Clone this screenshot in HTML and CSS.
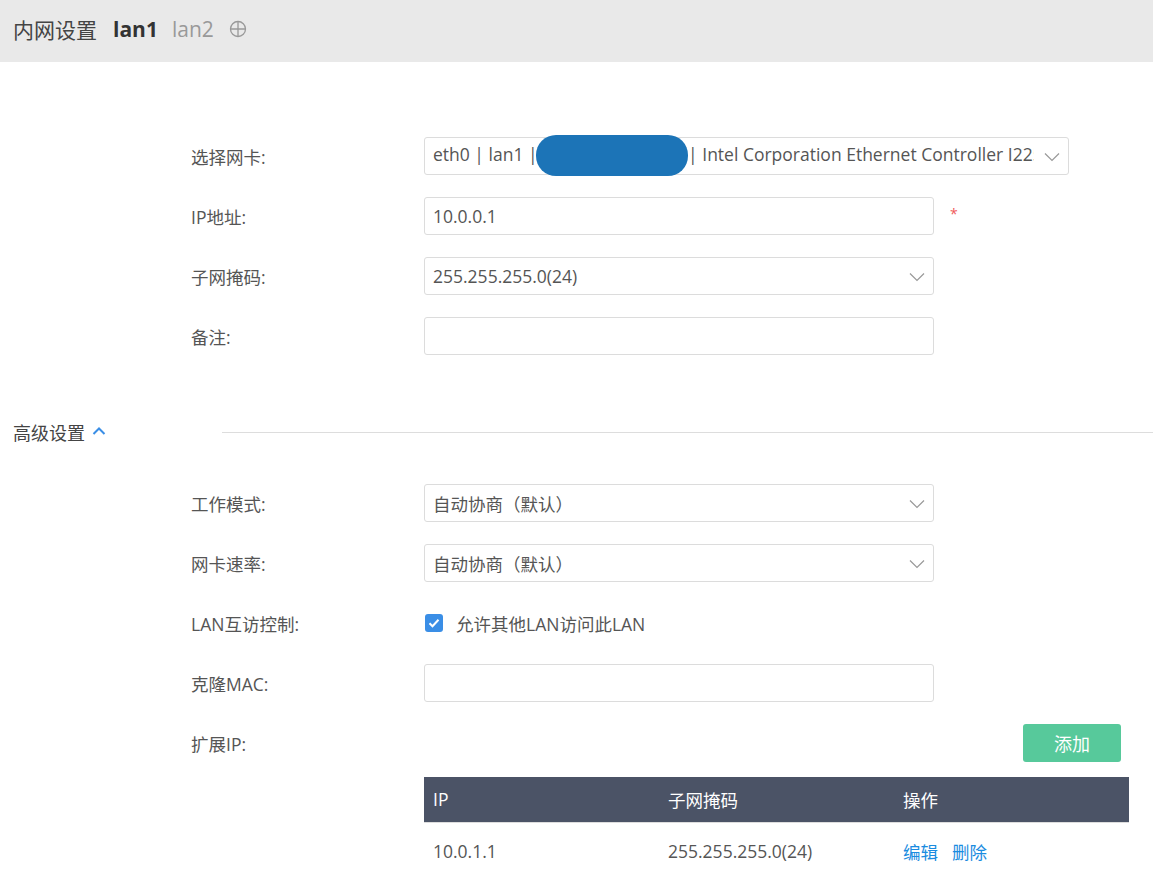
FILE: index.html
```html
<!DOCTYPE html>
<html lang="zh">
<head>
<meta charset="utf-8">
<link rel="stylesheet" href="styles.css">
</head>
<body>
<div class="header">
  <span class="title">内网设置</span>
  <span class="tab active">lan1</span>
  <span class="tab">lan2</span>
  <svg class="add-tab" width="18" height="18" viewBox="0 0 18 18"><circle cx="9" cy="9" r="7.5" fill="none" stroke="#999" stroke-width="1.3"/><path d="M1.5 9h15M9 1.5v15" stroke="#999" stroke-width="1.3"/></svg>
</div>

<div class="form first">
  <div class="row">
    <div class="label">选择网卡:</div>
    <div class="field select wide">
      <span class="val">eth0 | lan1 | <span class="blob"></span>| Intel Corporation Ethernet Controller I225-V</span>
      <svg class="arrow" width="16" height="10" viewBox="0 0 16 10"><path d="M1 1.5l7 7 7-7" fill="none" stroke="#999" stroke-width="1.2"/></svg>
    </div>
  </div>
  <div class="row">
    <div class="label">IP地址:</div>
    <div class="field"><span class="val">10.0.0.1</span></div>
    <span class="req">*</span>
  </div>
  <div class="row">
    <div class="label">子网掩码:</div>
    <div class="field select">
      <span class="val">255.255.255.0(24)</span>
      <svg class="arrow" width="16" height="10" viewBox="0 0 16 10"><path d="M1 1.5l7 7 7-7" fill="none" stroke="#999" stroke-width="1.2"/></svg>
    </div>
  </div>
  <div class="row">
    <div class="label">备注:</div>
    <div class="field"></div>
  </div>
</div>

<div class="section">
  <span class="section-title">高级设置</span>
  <svg class="chev" width="14" height="10" viewBox="0 0 14 10"><path d="M1.5 8l5.5-5.5 5.5 5.5" fill="none" stroke="#3a8ee6" stroke-width="2"/></svg>
  <div class="section-line"></div>
</div>

<div class="form second">
  <div class="row">
    <div class="label">工作模式:</div>
    <div class="field select">
      <span class="val">自动协商（默认）</span>
      <svg class="arrow" width="16" height="10" viewBox="0 0 16 10"><path d="M1 1.5l7 7 7-7" fill="none" stroke="#999" stroke-width="1.2"/></svg>
    </div>
  </div>
  <div class="row">
    <div class="label">网卡速率:</div>
    <div class="field select">
      <span class="val">自动协商（默认）</span>
      <svg class="arrow" width="16" height="10" viewBox="0 0 16 10"><path d="M1 1.5l7 7 7-7" fill="none" stroke="#999" stroke-width="1.2"/></svg>
    </div>
  </div>
  <div class="row">
    <div class="label">LAN互访控制:</div>
    <label class="check">
      <span class="box"><svg width="12" height="10" viewBox="0 0 12 10"><path d="M1.5 5.2l3 3 6-6.5" fill="none" stroke="#fff" stroke-width="2"/></svg></span>
      <span class="check-text">允许其他LAN访问此LAN</span>
    </label>
  </div>
  <div class="row">
    <div class="label">克隆MAC:</div>
    <div class="field"></div>
  </div>
  <div class="row ext">
    <div class="label">扩展IP:</div>
    <div class="spacer"></div>
    <button class="btn-add">添加</button>
  </div>
  <table class="tbl">
    <thead>
      <tr><th class="c1">IP</th><th class="c2">子网掩码</th><th class="c3">操作</th></tr>
    </thead>
    <tbody>
      <tr><td>10.0.1.1</td><td>255.255.255.0(24)</td><td><a class="link">编辑</a><a class="link">删除</a></td></tr>
    </tbody>
  </table>
</div>
</body>
</html>
```
FILE: styles.css
```css
* { box-sizing: border-box; }
html, body { margin: 0; padding: 0; background: #fff; }
body {
  font-family: "Open Sans", "Noto Sans CJK SC", sans-serif;
  font-size: 17.5px;
  color: #555;
  width: 1153px;
  height: 871px;
  overflow: hidden;
}
.header {
  height: 62px;
  background: #e9e9e9;
  display: flex;
  align-items: center;
  padding-left: 13px;
  padding-bottom: 4px;
}
.title { font-size: 21px; color: #444; margin-right: 16px; }
.tab { font-size: 21px; color: #999; margin-right: 15px; }
.tab.active { color: #333; font-weight: 700; margin-right: 14px; }
.add-tab { margin-left: 0; }

.form { padding-left: 191px; }
.form.first { padding-top: 75px; }
.row {
  display: flex;
  align-items: center;
  height: 38px;
  margin-bottom: 22px;
}
.label { width: 233px; color: #555; }
.field {
  width: 510px;
  height: 38px;
  border: 1px solid #dcdcdc;
  border-radius: 3px;
  display: flex;
  align-items: center;
  padding: 0 8px;
  position: relative;
  white-space: nowrap;
  overflow: visible;
}
.field.wide { width: 645px; }
.field .val { color: #555; overflow: hidden; flex: 1; min-width: 0; margin-right: 28px; }
.field.wide .val { overflow-x: clip; overflow-y: visible; margin-right: 26px; }
.blob {
  display: inline-block;
  width: 152px;
  height: 41px;
  background: #1c74b7;
  border-radius: 20px;
  vertical-align: middle;
  margin: -6px 0 -4px -6px;
}
.arrow { position: absolute; right: 8px; top: 14px; }
.req { color: #f05a5a; margin-left: 16px; font-size: 14px; margin-top: -6px; }

.section {
  display: flex;
  align-items: center;
  height: 40px;
  margin-top: 57px;
  padding-left: 13px;
}
.section-title { color: #444; font-size: 18px; }
.chev { margin-left: 7px; margin-top: -2px; }
.section-line {
  flex: 1;
  height: 1px;
  background: #ddd;
  margin-left: 116px;
  margin-top: 0;
}
.form.second { padding-top: 32px; }

.check { display: flex; align-items: center; }
.box {
  width: 18px;
  height: 18px;
  border-radius: 3px;
  background: #3a8ee6;
  display: flex;
  align-items: center;
  justify-content: center;
  margin-left: 1px;
  margin-right: 13px;
}
.check-text { color: #555; }

.spacer { width: 599px; }
.btn-add {
  width: 98px;
  height: 38px;
  border: none;
  border-radius: 3px;
  background: #57c99b;
  color: #fff;
  font-family: inherit;
  font-size: 18px;
}
.ext { margin-bottom: 15px; }

.tbl {
  margin-left: 233px;
  width: 705px;
  border-collapse: collapse;
}
.tbl th {
  background: #4b5366;
  color: #fff;
  font-weight: 400;
  text-align: left;
  height: 45px;
  padding: 0 9px;
  border-bottom: 1px solid #ddd;
}
.tbl .c1, .tbl .c2 { width: 235px; }
.tbl td {
  height: 58px;
  padding: 0 9px;
  color: #555;
}
.link { color: #1a8ce0; margin-right: 14px; }
```
